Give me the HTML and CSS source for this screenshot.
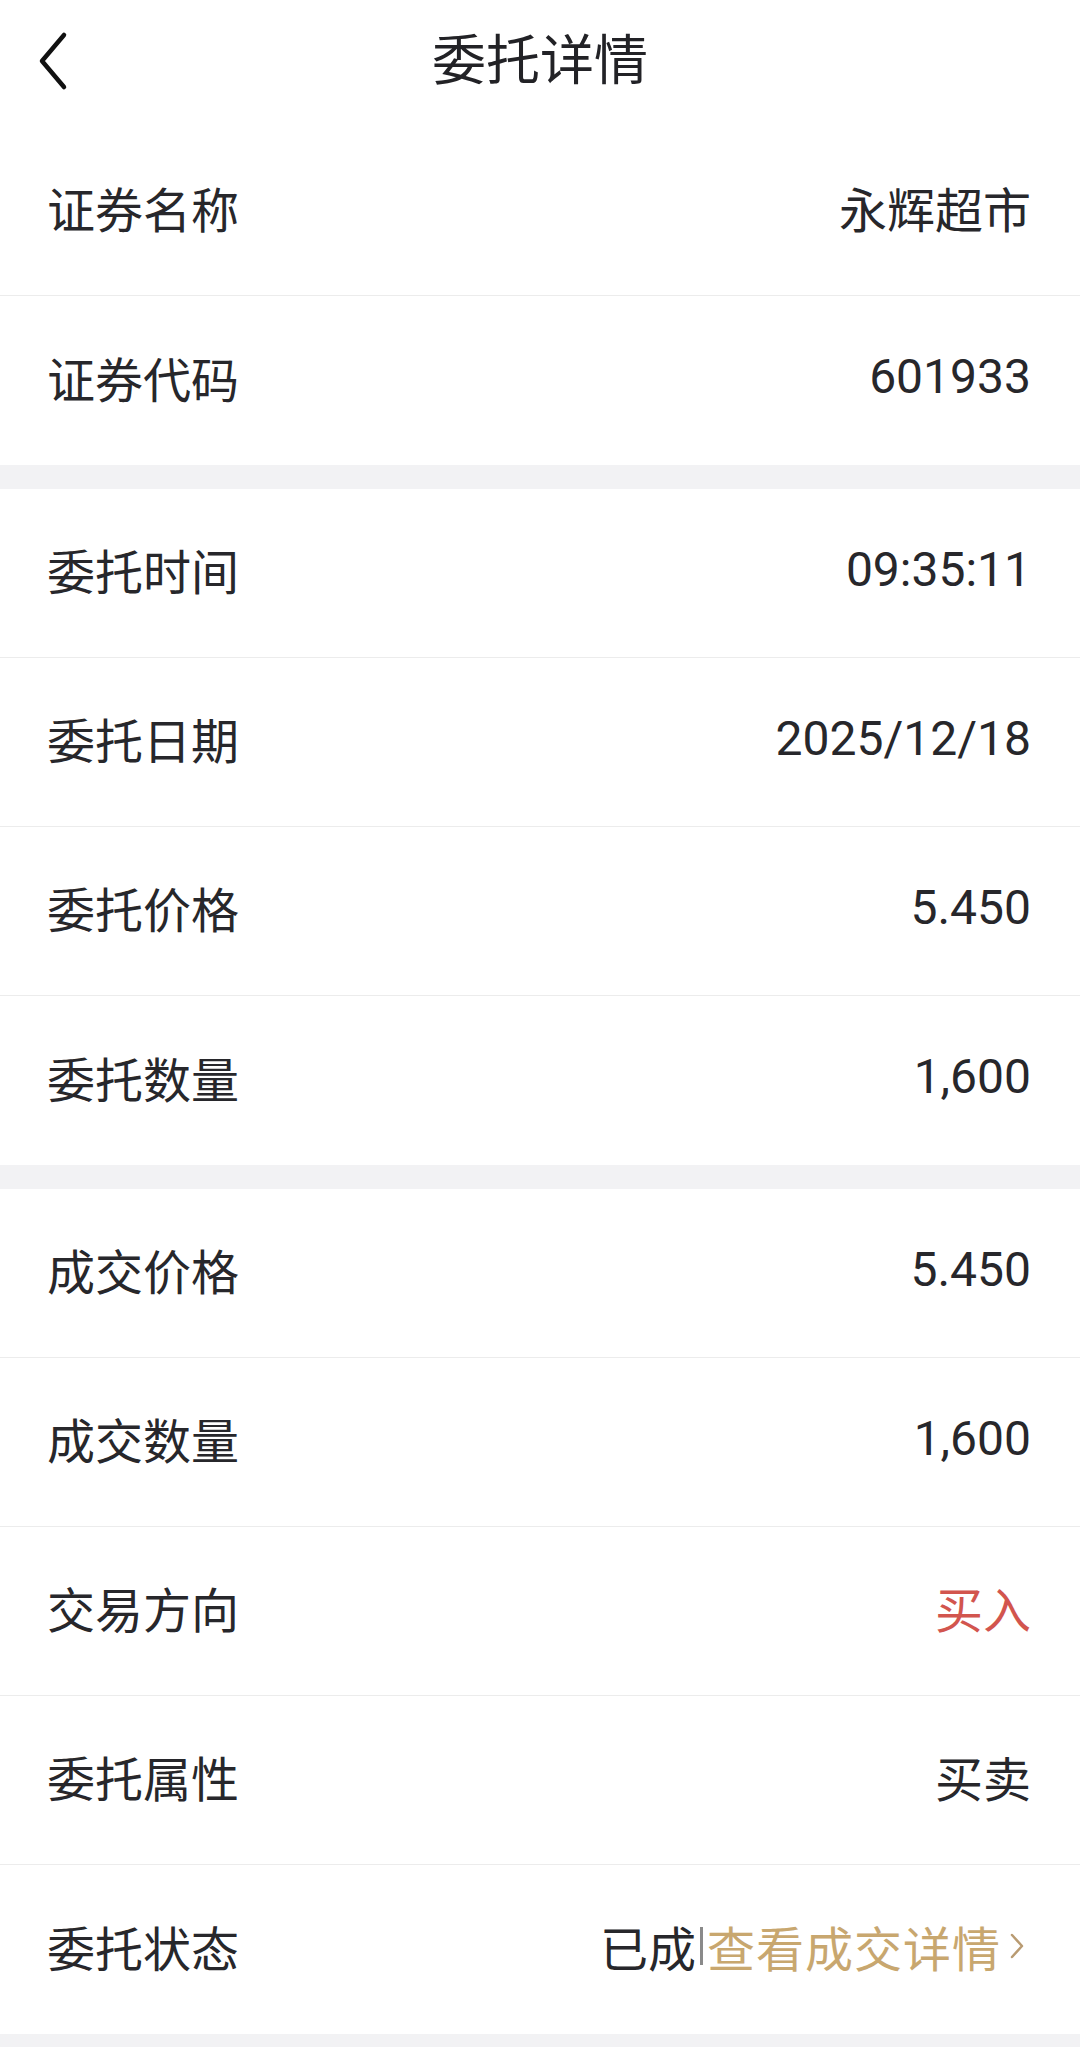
FILE: index.html
```html
<!DOCTYPE html>
<html lang="zh-CN">
<head>
  <meta charset="UTF-8">
  <title>委托详情</title>
  <link rel="stylesheet" href="styles.css">
</head>
<body>
  <div class="topbar">
    <svg class="back" width="40" height="60" viewBox="0 0 40 60">
      <polyline points="32,4 10,30 32,56" fill="none" stroke="#111" stroke-width="4.5" stroke-linecap="round" stroke-linejoin="round"/>
    </svg>
    <div class="title">委托详情</div>
  </div>

  <div class="section">
    <div class="row"><span class="label">证券名称</span><span class="value">永辉超市</span></div>
    <div class="row"><span class="label">证券代码</span><span class="value">601933</span></div>
  </div>

  <div class="section">
    <div class="row"><span class="label">委托时间</span><span class="value">09:35:11</span></div>
    <div class="row"><span class="label">委托日期</span><span class="value">2025/12/18</span></div>
    <div class="row"><span class="label">委托价格</span><span class="value">5.450</span></div>
    <div class="row"><span class="label">委托数量</span><span class="value">1,600</span></div>
  </div>

  <div class="section">
    <div class="row"><span class="label">成交价格</span><span class="value">5.450</span></div>
    <div class="row"><span class="label">成交数量</span><span class="value">1,600</span></div>
    <div class="row"><span class="label">交易方向</span><span class="value buy">买入</span></div>
    <div class="row"><span class="label">委托属性</span><span class="value">买卖</span></div>
    <div class="row">
      <span class="label">委托状态</span>
      <span class="value status">
        已成<span class="sep"></span><span class="link">查看成交详情</span>
        <svg class="arrow" width="16" height="28" viewBox="0 0 16 28">
          <polyline points="3,3 13,14 3,25" fill="none" stroke="#b99b72" stroke-width="2.5" stroke-linecap="round" stroke-linejoin="round"/>
        </svg>
      </span>
    </div>
  </div>
</body>
</html>
```

FILE: styles.css
```css
body {
  margin: 0;
  background: #f2f2f4;
  font-family: Roboto, "Noto Sans CJK SC", sans-serif;
  color: #27272b;
}

/* header */
.topbar {
  height: 127px;
  background: #fff;
  display: flex;
  align-items: flex-start;
  justify-content: center;
  position: relative;
}
.back {
  position: absolute;
  left: 32px;
  top: 31px;
}
.title {
  font-size: 54px;
  line-height: 54px;
  margin-top: 35px;
  color: #222226;
}

/* detail groups */
.section {
  background: #fff;
  margin-bottom: 24px;
}
.row {
  height: 169px;
  box-sizing: border-box;
  display: flex;
  align-items: center;
  justify-content: space-between;
  border-bottom: 1px solid #ececec;
  padding: 0 49px 8px 47px;
  font-size: 48px;
}
.row:last-child {
  border-bottom: none;
}
.value {
  text-align: right;
}
.buy {
  color: #d2554e;
}
.status {
  display: flex;
  align-items: center;
  margin-right: 6px;
}
.sep {
  display: inline-block;
  width: 3px;
  height: 38px;
  background: #8a8a8a;
  margin: 0 4px 0 4px;
}
.link {
  color: #c8a76f;
  letter-spacing: 1px;
}
.arrow {
  margin-left: 8px;
}
```
